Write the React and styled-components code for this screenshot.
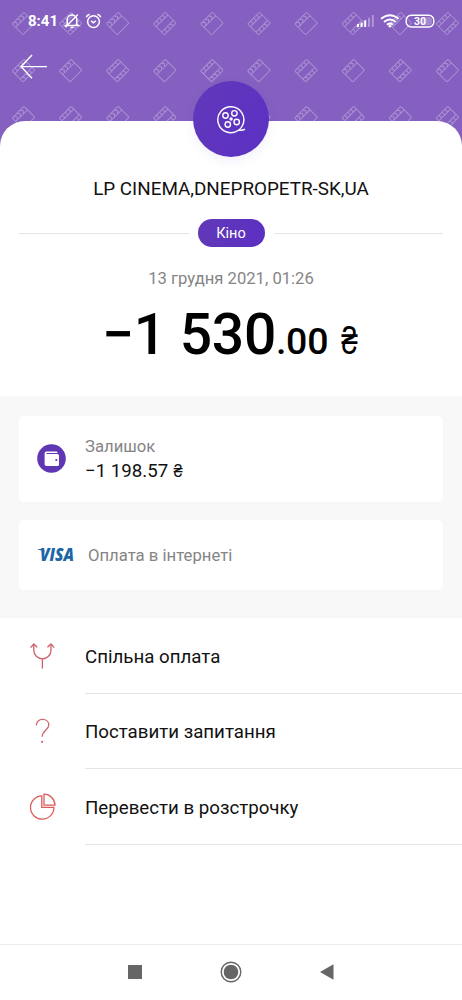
import React from 'react'
import styled, { createGlobalStyle } from 'styled-components'

const GlobalStyle = createGlobalStyle`
  * { box-sizing: border-box; }
  body {
    margin: 0;
    background: #fff;
    font-family: Roboto, 'Noto Sans', sans-serif;
    color: #111;
  }
`;

const Screen = styled.div`
display: flex;
flex-direction: column;
width: 462px;
height: 1000px;
overflow: hidden;
background: #fff;
`;

const Header = styled.header`
position: relative;
height: 146px;
margin-bottom: -25px;
flex: none;
background: #8560c0;
`;

const Pattern = styled.svg`
position: absolute;
top: 0;
left: 0;
`;

const StatusBar = styled.div`
position: relative;
display: flex;
align-items: center;
height: 42px;
padding: 0 27px 0 28px;
color: #fff;
`;

const Clock = styled.span`
font-size: 15px;
font-weight: 700;
line-height: 20px;
width: 36px;
`;

const StatusIcons = styled.svg`
margin-left: ${(p) => p.$left || '0'};
`;

const BackButton = styled.button`
position: relative;
display: block;
margin: 12px 0 0 19px;
padding: 0;
border: none;
background: none;
height: 26px;
`;

const Sheet = styled.main`
position: relative;
display: flex;
flex-direction: column;
align-items: center;
flex: none;
height: 275px;
border-radius: 25px 25px 0 0;
background: #fff;
`;

const Badge = styled.div`
display: flex;
align-items: center;
justify-content: center;
width: 76px;
height: 76px;
margin-top: -40px;
border-radius: 50%;
background: linear-gradient(120deg, #6138ba, #5c30c4);
box-shadow: 0 4px 12px rgba(90, 50, 180, 0.08);
`;

const Merchant = styled.h1`
margin: 20px 0 0;
font-size: 18.85px;
font-weight: 400;
line-height: 24px;
white-space: nowrap;
`;

const CategoryRow = styled.div`
display: flex;
align-items: center;
gap: 9px;
width: 100%;
height: 28px;
margin-top: 18px;
padding: 0 19px;
`;

const Rule = styled.span`
flex: 1;
height: 1px;
background: #e6e6e8;
`;

const Category = styled.span`
width: 67px;
height: 28px;
border-radius: 14px;
background: linear-gradient(100deg, #6238b8, #5b30c2);
color: #fff;
font-size: 14.5px;
line-height: 29px;
text-align: center;
`;

const DateText = styled.div`
margin-top: 22px;
font-size: 16.65px;
line-height: 20px;
color: #858585;
white-space: nowrap;
`;

const Amount = styled.div`
display: flex;
align-items: baseline;
margin-top: 13px;
height: 66px;
line-height: 66px;
font-size: 57px;
font-weight: 500;
letter-spacing: -0.3px;
color: #000;
white-space: pre;
`;

const Cents = styled.span`
font-size: 37.5px;
`;

const Currency = styled.span`
display: inline-block;
margin-left: 11px;
font-family: 'Liberation Sans', sans-serif;
font-size: 38px;
font-weight: 400;
line-height: 1;
transform: scaleX(0.78);
`;

const Details = styled.section`
display: flex;
flex-direction: column;
gap: 18px;
flex: none;
height: 222px;
padding: 20px 19px;
background: #f8f8f8;
`;

const Card = styled.div`
display: flex;
align-items: center;
height: ${(p) => p.$height};
padding-left: 18px;
border-radius: 5px;
background: #fff;
`;

const Balance = styled.div`
margin-left: 19px;
`;

const Muted = styled.div`
font-size: 16.7px;
line-height: 24px;
padding-top: ${(p) => p.$top || '0'};
color: #858585;
`;

const BalanceValue = styled.div`
font-size: 18.7px;
line-height: 23px;
`;

const SmallCurrency = styled.span`
display: inline-block;
font-family: 'Liberation Sans', sans-serif;
transform: scaleX(0.88);
`;

const WalletMark = styled.svg`
margin-bottom: 2px;
`;

const VisaLogo = styled.svg`
margin-right: 11px;
overflow: visible;
`;

const Actions = styled.ul`
flex: 1;
margin: 0;
padding: 0;
list-style: none;
`;

const Action = styled.li`
display: flex;
align-items: center;
height: 75.6px;
`;

const ActionIcon = styled.svg`
flex: none;
margin: 0 29px 0 28px;
`;

const ActionLabel = styled.span`
display: flex;
align-items: center;
flex: 1;
height: 100%;
border-bottom: 1px solid #e4e4e6;
font-size: 18.7px;
padding-top: 3px;
`;

const NavBar = styled.nav`
display: flex;
align-items: center;
justify-content: center;
gap: 78px;
flex: none;
height: 56px;
padding-bottom: 1px;
border-top: 1px solid #ededed;
`;

// cells of the repeating film / clapper background
const cells = [];
for (let row = 0; row < 3; row++) {
  for (let col = 0; col < 10; col++) {
    cells.push({ x: 23.5 + col * 47.1, y: 23.5 + row * 47.1, film: (row + col) % 2 === 1 });
  }
}

function HeaderPattern() {
  return (
    <Pattern width="462" height="146" fill="none" stroke="#fff" strokeWidth="1" opacity="0.3">
      <defs>
        <g id="clapper">
          <rect x="-8.3" y="-7.7" width="16.6" height="15.4" rx="0.8" />
          <path d="M-8.3 -2.8H8.3M-6 -7.7L-4 -5.2L-6 -2.8M-1.6 -7.7L0.4 -5.2L-1.6 -2.8M2.8 -7.7L4.8 -5.2L2.8 -2.8" />
        </g>
        <g id="film">
          <rect x="-8.3" y="-7.7" width="16.6" height="15.4" rx="0.8" />
          <path d="M-8.3 -3.9H8.3M-8.3 3.9H8.3M-4.2 -7.7V-3.9M0 -7.7V-3.9M4.2 -7.7V-3.9M-4.2 7.7V3.9M0 7.7V3.9M4.2 7.7V3.9" />
        </g>
      </defs>
      {cells.map((cell, i) => (
        <use
          key={i}
          href={cell.film ? '#film' : '#clapper'}
          transform={`translate(${cell.x} ${cell.y}) rotate(-45)`}
        />
      ))}
    </Pattern>
  );
}

function ReelIcon() {
  return (
    <svg width="30" height="30" viewBox="0 0 30 30" fill="none" stroke="#fff" strokeWidth="1.4">
      <path d="M22.5 26.2A13 13 0 1 1 26.6 21.2C25.7 23.2 24.4 24.8 22.8 26C25 26.6 27 26.4 29 25.2" />
      <circle cx="9.5" cy="11.5" r="2.7" />
      <circle cx="18.4" cy="9.3" r="2.7" />
      <circle cx="20.7" cy="18" r="2.7" />
      <circle cx="11.8" cy="20.5" r="2.7" />
      <circle cx="15.1" cy="15" r="1.7" fill="#fff" stroke="none" />
    </svg>
  );
}

function WalletIcon() {
  return (
    <WalletMark width="29" height="29" viewBox="0 0 29 29">
      <circle cx="14.5" cy="14.5" r="14.3" fill="#5f37b5" />
      <path d="M9.3 7.6H19Q20.6 7.6 20.6 9H9.4V9.9H20.4Q22 9.9 22 11.4V20.4Q22 22 20.4 22H9.4Q7.6 22 7.6 20.2V9.3Q7.6 7.6 9.3 7.6Z" fill="#fff" />
      <circle cx="19.3" cy="16" r="1.1" fill="#5f37b5" />
    </WalletMark>
  );
}

function SplitIcon() {
  return (
    <ActionIcon width="28" height="28" viewBox="0 0 28 28" fill="none" stroke="#cf5f68" strokeWidth="1.3">
      <path d="M5.8 2V8.2A8.6 8.6 0 0 0 23 8.2V2M14.4 16.8V26.5" />
      <path d="M2.6 5.6L5.8 2L9.2 5.2M19.4 5.2L23 2L26.2 5.6" />
    </ActionIcon>
  );
}

function QuestionIcon() {
  return (
    <ActionIcon width="28" height="28" viewBox="0 0 28 28" fill="none" stroke="#cf6a70" strokeWidth="1.3">
      <path d="M8.4 8.6C8.4 4.6 11 2.3 14.5 2.3C18.2 2.3 20.8 4.7 20.8 8C20.8 13 14.2 13 14.2 19.8" />
      <circle cx="14.1" cy="24.8" r="1.1" fill="#c96b72" stroke="none" />
    </ActionIcon>
  );
}

function PieIcon() {
  return (
    <ActionIcon width="28" height="28" viewBox="0 0 28 28" fill="none" stroke="#dc5c5c" strokeWidth="1.3">
      <path d="M13.8 2.8A11.7 11.7 0 1 0 25.9 14.4H13.8Z" />
      <path d="M16 1.2A11 11 0 0 1 27 12.2H16Z" />
    </ActionIcon>
  );
}

const actions = [
  { label: 'Спільна оплата', Icon: SplitIcon },
  { label: 'Поставити запитання', Icon: QuestionIcon },
  { label: 'Перевести в розстрочку', Icon: PieIcon },
];

function App() {
  return (
    <Screen>
      <GlobalStyle />
      <Header>
        <HeaderPattern />
        <StatusBar>
          <Clock>8:41</Clock>
          <StatusIcons width="38" height="16" viewBox="0 0 38 16" fill="none" stroke="#fff" strokeWidth="1.5">
            <path d="M3.2 11.6V6.8A4.8 4.8 0 0 1 12.8 6.8V11.6L14.4 12.6H1.6Z M6.4 14.6H9.6M8 2V0.8" />
            <path d="M1.4 14.2L13.8 1.4" />
            <circle cx="29.5" cy="8.6" r="5.9" />
            <path d="M22.2 4.2Q23.2 1.8 25.6 1.2M33.4 1.2Q35.8 1.8 36.8 4.2M27 7.8L29.5 9.8L31.8 7.8" />
          </StatusIcons>
          <StatusIcons $left="auto" width="79" height="16" viewBox="0 0 79 16" fill="#fff">
            <path d="M1 11h2v3h-2zM4.6 9.4h2V14h-2zM8.2 7.2h2V14h-2z" />
            <path d="M12 4.8h2V14h-2zM15.8 2h2V14h-2z" opacity="0.35" />
            <g fill="none" stroke="#fff" strokeWidth="1.9">
              <path d="M25 5.8Q34 -1.4 42.6 5.8M28 9Q34 4.2 39.7 9M31 11.8Q34 9.4 36.8 11.8" />
            </g>
            <circle cx="33.9" cy="13.2" r="1.4" />
            <rect x="50.2" y="2.2" width="27.6" height="11.8" rx="5" fill="none" stroke="#fff" strokeWidth="1.4" />
            <rect x="66" y="4" width="10" height="8.2" rx="3" opacity="0.25" />
            <text x="64" y="12" fontSize="10.5" fontWeight="700" textAnchor="middle">30</text>
          </StatusIcons>
        </StatusBar>
        <BackButton aria-label="Назад">
          <svg width="30" height="26" viewBox="0 0 30 26" fill="none" stroke="#fff" strokeWidth="1.4">
            <path d="M28 12.6H2M13 1L2 12.6L13 24.2" />
          </svg>
        </BackButton>
      </Header>

      <Sheet>
        <Badge><ReelIcon /></Badge>
        <Merchant>LP CINEMA,DNEPROPETR-SK,UA</Merchant>
        <CategoryRow>
          <Rule />
          <Category>Кіно</Category>
          <Rule />
        </CategoryRow>
        <DateText>13 грудня 2021, 01:26</DateText>
        <Amount>
          −1 530<Cents>.00</Cents><Currency>₴</Currency>
        </Amount>
      </Sheet>

      <Details>
        <Card $height="86px">
          <WalletIcon />
          <Balance>
            <Muted>Залишок</Muted>
            <BalanceValue>−1 198.57 <SmallCurrency>₴</SmallCurrency></BalanceValue>
          </Balance>
        </Card>
        <Card $height="70px">
          <VisaLogo width="40" height="28" viewBox="0 0 40 28" fill="#1c66a8">
            <text x="3" y="20" fontFamily="Open Sans" fontSize="16.8" fontWeight="800" fontStyle="italic" textLength="34" lengthAdjust="spacingAndGlyphs">VISA</text>
            <path d="M0.8 8H7L7.6 11.6Q5 8.8 0.8 8.5Z" />
          </VisaLogo>
          <Muted $top="2px">Оплата в інтернеті</Muted>
        </Card>
      </Details>

      <Actions>
        {actions.map(({ label, Icon }) => (
          <Action key={label}>
            <Icon />
            <ActionLabel>{label}</ActionLabel>
          </Action>
        ))}
      </Actions>

      <NavBar>
        <svg width="14" height="14" viewBox="0 0 14 14" fill="#666"><path d="M0 0h14v14H0z" /></svg>
        <svg width="22" height="22" viewBox="0 0 22 22" fill="#666">
          <circle cx="11" cy="11" r="7.3" />
          <circle cx="11" cy="11" r="9.8" fill="none" stroke="#666" strokeWidth="1.4" />
        </svg>
        <svg width="14" height="16" viewBox="0 0 14 16" fill="#666"><path d="M0 8L13.5 0.2V15.8Z" /></svg>
      </NavBar>
    </Screen>
  );
}

export default App;
